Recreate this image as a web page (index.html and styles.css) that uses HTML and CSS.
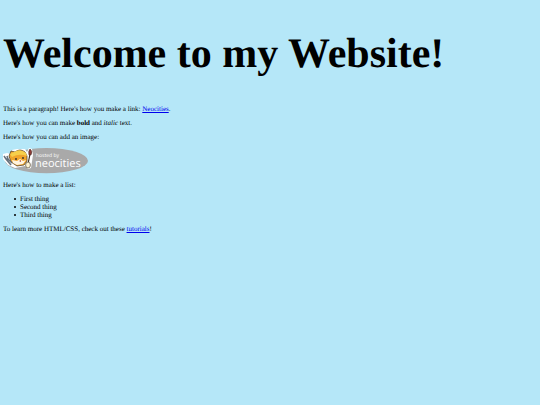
FILE: index.html
```html
<!DOCTYPE html>
<html lang="en">
<head>
<meta charset="utf-8">
<title>Welcome to my Website!</title>
<link rel="stylesheet" href="styles.css">
</head>
<body>
<h1>Welcome to my Website!</h1>
<p>This is a paragraph! Here's how you make a link: <a href="#">Neocities</a>.</p>
<p>Here's how you can make <strong>bold</strong> and <em>italic</em> text.</p>
<p>Here's how you can add an image:</p>
<svg class="badge" viewBox="0 0 85 26" role="img">
<ellipse cx="43.5" cy="12.7" rx="41.5" ry="12.6" fill="#a9a9a9"/>
<path d="M0 6L4 5L8 6L9 2L14 1L22 1L24 4L26 0L29 1L30 7L28 20L25 21L22 18L12 20L5 17L0 11Z" fill="#fff"/>
<path d="M6 8L8 3L12 4Q17 0 22 4L24 8L24 13L21 17L14 18L8 14Z" fill="#f0a52c" stroke="#443322" stroke-width=".7"/>
<path d="M7 6L11 4Q17 0 23 5L24 8Q16 5 9 9Z" fill="#f6cf4b"/>
<path d="M9 12L14 13L17 11L20 13L23 12L20 16L14 17L10 15Z" fill="#fff4df"/>
<circle cx="13" cy="11" r=".9" fill="#332b29"/><circle cx="20" cy="10" r=".9" fill="#332b29"/>
<path d="M16 13L18 12L18 14Z" fill="#b65547"/>
<path d="M1 8L3 11L8 17M4 8L5 11L9 15M3 11L5 11" fill="none" stroke="#66717c" stroke-width="1.5"/>
<path d="M27 6L25 16" stroke="#443322" stroke-width="1.2"/>
<path d="M27 1Q30 3 28 7L26 7Q25 3 27 1Z" fill="#913b36" stroke="#44312b" stroke-width=".6"/>
<ellipse cx="25" cy="17" rx="2.4" ry="3" fill="#fff5d3" stroke="#554838" stroke-width=".7"/>
<text class="small" x="33" y="9">hosted by</text>
<text class="big" x="32" y="19">neocities</text>
</svg>
<p>Here's how to make a list:</p>
<ul>
<li>First thing</li>
<li>Second thing</li>
<li>Third thing</li>
</ul>
<p>To learn more HTML/CSS, check out these <a href="#">tutorials</a>!</p>
</body>
</html>
```
FILE: styles.css
```css
body { margin: 3px; background: #b5e7f8; color: #000; font: 7px/8px "Liberation Serif", serif; text-rendering: geometricPrecision; }
h1 { margin: 27px 0; font-size: 42px; line-height: 48px; }
p { margin: 6px 0; }
ul { margin: 6px 0; padding-left: 11px; list-style: none; }
li { display: flex; align-items: center; gap: 4px; }
li::before { content: ""; width: 2px; height: 2px; border-radius: 1px; background: #000; }
a { color: #00e; }
.badge { display: block; width: 85px; height: 26px; margin: 7px 0; }
.small { font: 5px "Open Sans", sans-serif; fill: #fff; }
.big { font: 11px "Open Sans", sans-serif; fill: #fff; }
```
